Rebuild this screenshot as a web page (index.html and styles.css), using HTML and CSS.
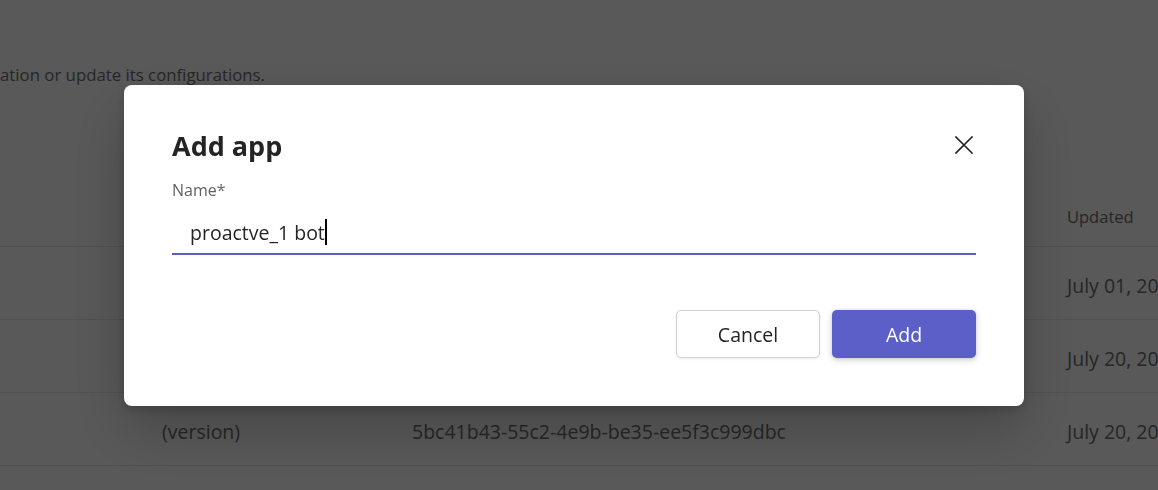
FILE: index.html
```html
<!DOCTYPE html>
<html lang="en">
<head>
<meta charset="utf-8">
<title>Add app</title>
<link rel="stylesheet" href="styles.css">
</head>
<body>
<div class="page">
  <p class="desc">ation or update its configurations.</p>
  <div class="table">
    <div class="row head">
      <div class="cell">Name</div>
      <div class="cell">App ID</div>
      <div class="cell">Updated</div>
    </div>
    <div class="row">
      <div class="cell">proactive bot</div>
      <div class="cell">2f6a1c20-8d1e-4b3a-9c55-0a7f1b2d3e44</div>
      <div class="cell">July 01, 2024</div>
    </div>
    <div class="row">
      <div class="cell">notify bot</div>
      <div class="cell">9e2b7d61-3f4c-4a0e-8b12-6c5d4e3f2a10</div>
      <div class="cell">July 20, 2024</div>
    </div>
    <div class="row">
      <div class="cell">(version)</div>
      <div class="cell">5bc41b43-55c2-4e9b-be35-ee5f3c999dbc</div>
      <div class="cell">July 20, 2024</div>
    </div>
  </div>
</div>

<div class="overlay">
  <div class="dialog" role="dialog" aria-label="Add app">
    <div class="dialog-head">
      <h1 class="title">Add app</h1>
      <button class="close" aria-label="Close">
        <svg width="18" height="18" viewBox="0 0 18 18"><path d="M1 1 L17 17 M17 1 L1 17" stroke="#242424" stroke-width="1.6" fill="none" stroke-linecap="square"/></svg>
      </button>
    </div>
    <label class="label">Name*</label>
    <div class="input"><span class="value">proactve_1 bot</span><span class="caret"></span></div>
    <div class="actions">
      <button class="btn btn-secondary">Cancel</button>
      <button class="btn btn-primary">Add</button>
    </div>
  </div>
</div>
</body>
</html>
```

FILE: styles.css
```css
html, body {
  margin: 0;
  padding: 0;
  overflow: hidden;
  height: 490px;
}
body {
  font-family: "Open Sans", "Noto Sans", sans-serif;
  background: #ffffff;
  color: #6e6e6e;
}
.page {
  width: 1158px;
}
.desc {
  margin: 0;
  padding-top: 63px;
  font-size: 16.8px;
  line-height: 24px;
  white-space: nowrap;
  color: #6e6e6e;
}
.table {
  margin-top: 112px;
}
.row {
  display: grid;
  grid-template-columns: 250px 655px 1fr;
  padding-left: 162px;
  padding-top: 5px;
  height: 73px;
  box-sizing: border-box;
  align-items: center;
  border-bottom: 1px solid #e5e5e5;
  font-size: 19.5px;
  white-space: nowrap;
}
.row.head {
  height: 48px;
  padding-top: 0;
  padding-bottom: 12px;
  font-size: 16.5px;
}

.overlay {
  position: fixed;
  inset: 0;
  background: rgba(0, 0, 0, 0.65);
  display: flex;
  align-items: flex-start;
  padding: 85px 0 0 124px;
}
.dialog {
  width: 900px;
  box-sizing: border-box;
  background: #ffffff;
  border-radius: 8px;
  padding: 43px 48px 48px;
  display: flex;
  flex-direction: column;
  box-shadow: 0 25px 60px rgba(0, 0, 0, 0.22), 0 4px 12px rgba(0, 0, 0, 0.18);
}
.dialog-head {
  display: flex;
  align-items: center;
  justify-content: space-between;
  height: 36px;
}
.title {
  margin: 0;
  font-size: 27px;
  line-height: 36px;
  font-weight: 700;
  color: #242424;
}
.close {
  width: 24px;
  height: 24px;
  padding: 0;
  border: 0;
  background: transparent;
  display: flex;
  align-items: center;
  justify-content: center;
  margin-top: -2px;
}
.label {
  margin-top: 15px;
  font-size: 16px;
  line-height: 22px;
  color: #616161;
}
.input {
  margin-top: 10px;
  height: 44px;
  box-sizing: border-box;
  border-bottom: 2px solid #5b5fc7;
  padding-left: 18px;
  display: flex;
  align-items: center;
  font-size: 19.5px;
  color: #242424;
}
.caret {
  display: inline-block;
  width: 2px;
  height: 26px;
  background: #000;
}
.actions {
  margin-top: 55px;
  display: flex;
  justify-content: flex-end;
  gap: 12px;
}
.btn {
  width: 144px;
  height: 48px;
  box-sizing: border-box;
  border-radius: 5px;
  font-family: "Open Sans", "Noto Sans", sans-serif;
  font-size: 19.5px;
  padding: 0;
}
.btn-secondary {
  background: #ffffff;
  color: #242424;
  border: 1px solid #d1d1d1;
  box-shadow: 0 1px 3px rgba(0, 0, 0, 0.08);
}
.btn-primary {
  background: #5b5fc7;
  color: #ffffff;
  border: 0;
  box-shadow: 0 2px 6px rgba(0, 0, 0, 0.2), 0 0 2px rgba(0, 0, 0, 0.12);
}
```
